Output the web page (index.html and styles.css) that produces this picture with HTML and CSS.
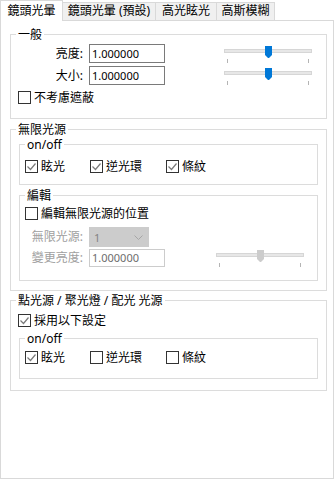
FILE: index.html
```html
<!DOCTYPE html>
<html lang="zh-Hant">
<head>
<meta charset="utf-8">
<link rel="stylesheet" href="styles.css">
</head>
<body>
<div class="tabs">
  <div class="tab active">鏡頭光暈</div>
  <div class="tab t2">鏡頭光暈 (預設)</div>
  <div class="tab t3">高光眩光</div>
  <div class="tab t4">高斯模糊</div>
</div>
<div class="panel">
  <fieldset class="grp g1">
    <legend>一般</legend>
    <div class="row r-first">
      <span class="lbl lbl-g">亮度:</span>
      <div class="edit">1.000000</div>
      <div class="slider sl-g">
        <div class="track"></div>
        <div class="ticks"><span></span><span></span></div>
        <svg class="thumb" width="7" height="12" viewBox="0 0 7 12"><polygon points="0,0 7,0 7,9 4,12 3,12 0,9"/></svg>
      </div>
    </div>
    <div class="row r-second">
      <span class="lbl lbl-g">大小:</span>
      <div class="edit">1.000000</div>
      <div class="slider sl-g">
        <div class="track"></div>
        <div class="ticks"><span></span><span></span></div>
        <svg class="thumb" width="7" height="12" viewBox="0 0 7 12"><polygon points="0,0 7,0 7,9 4,12 3,12 0,9"/></svg>
      </div>
    </div>
    <div class="chk chk-g1"><span class="box"></span><span>不考慮遮蔽</span></div>
  </fieldset>

  <fieldset class="grp g2">
    <legend>無限光源</legend>
    <fieldset class="grp sub onoff1">
      <legend>on/off</legend>
      <div class="checks checks1">
        <div class="chk c-a"><span class="box"><svg width="11" height="11" viewBox="0 0 11 11"><polyline points="1.5,5.5 4.5,8.5 9.5,2.5"/></svg></span><span>眩光</span></div>
        <div class="chk c-b"><span class="box"><svg width="11" height="11" viewBox="0 0 11 11"><polyline points="1.5,5.5 4.5,8.5 9.5,2.5"/></svg></span><span>逆光環</span></div>
        <div class="chk"><span class="box"><svg width="11" height="11" viewBox="0 0 11 11"><polyline points="1.5,5.5 4.5,8.5 9.5,2.5"/></svg></span><span>條紋</span></div>
      </div>
    </fieldset>
    <fieldset class="grp sub edit-grp">
      <legend>編輯</legend>
      <div class="chk chk-edit"><span class="box"></span><span>編輯無限光源的位置</span></div>
      <div class="row r-combo">
        <span class="lbl lbl-e dis">無限光源:</span>
        <div class="combo">
          <span>1</span>
          <svg width="9" height="5" viewBox="0 0 9 5"><polyline points="0.5,0.5 4.5,4.5 8.5,0.5"/></svg>
        </div>
      </div>
      <div class="row r-bright">
        <span class="lbl lbl-e dis">變更亮度:</span>
        <div class="edit edit-dis">1.000000</div>
        <div class="slider sl-e dis-slider">
          <div class="track"></div>
          <div class="ticks"><span></span><span></span></div>
          <svg class="thumb" width="7" height="12" viewBox="0 0 7 12"><polygon points="0,0 7,0 7,9 4,12 3,12 0,9"/></svg>
        </div>
      </div>
    </fieldset>
  </fieldset>

  <fieldset class="grp g3">
    <legend>點光源 / 聚光燈 / 配光 光源</legend>
    <div class="chk chk-g3"><span class="box"><svg width="11" height="11" viewBox="0 0 11 11"><polyline points="1.5,5.5 4.5,8.5 9.5,2.5"/></svg></span><span>採用以下設定</span></div>
    <fieldset class="grp sub onoff2">
      <legend>on/off</legend>
      <div class="checks checks2">
        <div class="chk c-a"><span class="box"><svg width="11" height="11" viewBox="0 0 11 11"><polyline points="1.5,5.5 4.5,8.5 9.5,2.5"/></svg></span><span>眩光</span></div>
        <div class="chk c-b"><span class="box"></span><span>逆光環</span></div>
        <div class="chk"><span class="box"></span><span>條紋</span></div>
      </div>
    </fieldset>
  </fieldset>
</div>
</body>
</html>
```
FILE: styles.css
```css
* { box-sizing: border-box; }
html, body { margin: 0; padding: 0; background: #ffffff; }
body {
  font-family: "Noto Sans", "Noto Sans CJK TC", sans-serif;
  font-size: 12px;
  color: #000;
  width: 336px;
  height: 480px;
  overflow: hidden;
}

/* tabs */
.tabs { display: flex; align-items: flex-end; height: 20px; }
.tab {
  height: 18px;
  border: 1px solid #d9d9d9;
  border-bottom: none;
  background: #f0f0f0;
  line-height: 16px;
  text-align: center;
  white-space: nowrap;
  margin-left: -1px;
}
.tab.active {
  margin-left: 0;
  height: 21px;
  margin-bottom: -1px;
  background: #fff;
  position: relative;
  z-index: 1;
  padding-top: 1px;
  line-height: 17px;
  width: 63px;
}
.t2 { width: 94px; }
.t3 { width: 62px; }
.t4 { width: 59px; }

/* panel */
.panel {
  width: 334px;
  height: 459px;
  border: 1px solid #d9d9d9;
  background: #fff;
}

/* group boxes */
.grp {
  border: 1px solid #dcdcdc;
  margin: 0;
  padding: 0;
  min-inline-size: 0;
}
.grp > legend {
  height: 13px;
  line-height: 13px;
  padding: 0 2px;
  margin-left: 5px;
  white-space: nowrap;
}
.g1, .g2, .g3 { margin-left: 9px; width: 317px; }
.g1 { margin-top: 7px; padding-bottom: 14px; }
.g2 { margin-top: 4px; padding-bottom: 9px; }
.g3 { margin-top: 3px; padding-bottom: 11px; }
.sub { margin-left: 8px; width: 299px; }
.onoff1 { margin-top: 2px; padding-bottom: 11px; }
.edit-grp { margin-top: 4px; padding-bottom: 13px; }
.onoff2 { margin-top: 5px; padding-bottom: 14px; }

/* rows */
.row { display: flex; align-items: flex-start; }
.r-first { margin-top: 3px; }
.r-second { margin-top: 3px; }
.r-combo { margin-top: 7px; }
.r-bright { margin-top: 2px; }

.lbl {
  text-align: right;
  margin-right: 6px;
  white-space: nowrap;
  line-height: 19px;
}
.lbl-g { width: 72px; }
.lbl-e { width: 63px; }
.dis { color: #a0a0a0; }
.r-combo .lbl { line-height: 20px; }
.r-bright .lbl { line-height: 18px; }

.edit {
  width: 76px;
  height: 19px;
  border: 1px solid #7a7a7a;
  padding-left: 2px;
  font-size: 11px;
  line-height: 17px;
  color: #000;
}
.edit-dis {
  height: 18px;
  line-height: 16px;
  border-color: #cccccc;
  color: #6d6d6d;
}

.combo {
  width: 60px;
  height: 20px;
  background: #cccccc;
  border: 1px solid #cccccc;
  display: flex;
  align-items: center;
  justify-content: space-between;
  padding: 0 5px 0 4px;
  font-size: 11px;
  color: #838383;
}
.combo svg { fill: none; stroke: #a6a6a6; stroke-width: 1; }

/* sliders */
.slider { position: relative; width: 88px; height: 17px; }
.sl-g { margin-left: 59px; margin-top: 2px; }
.sl-e { margin-left: 51px; margin-top: 1px; }
.track {
  margin-top: 3px;
  height: 4px;
  background: #e7e7e7;
  border: 1px solid #d6d6d6;
}
.ticks {
  display: flex;
  justify-content: space-between;
  padding: 0 3px;
  margin-top: 6px;
}
.ticks span { width: 1px; height: 4px; background: #b4b4b4; }
.thumb { position: absolute; left: 41px; top: 0; fill: #0078d7; }
.dis-slider .thumb { fill: #cccccc; }

/* checkboxes */
.chk { display: flex; align-items: center; height: 13px; line-height: 13px; white-space: nowrap; }
.box {
  width: 13px;
  height: 13px;
  border: 1px solid #333333;
  margin-right: 3px;
  display: flex;
  align-items: center;
  justify-content: center;
  flex: none;
}
.box svg { fill: none; stroke: #7a7a7a; stroke-width: 1.2; }
.chk-g1 { margin-top: 6px; padding-left: 7px; }
.chk-g3 { margin-top: 7px; padding-left: 7px; }
.chk-edit { margin-top: 5px; padding-left: 5px; }

.checks { display: flex; padding-left: 5px; }
.checks1 { margin-top: 9px; }
.checks2 { margin-top: 6px; }
.c-a { width: 65px; }
.c-b { width: 76px; }
```
